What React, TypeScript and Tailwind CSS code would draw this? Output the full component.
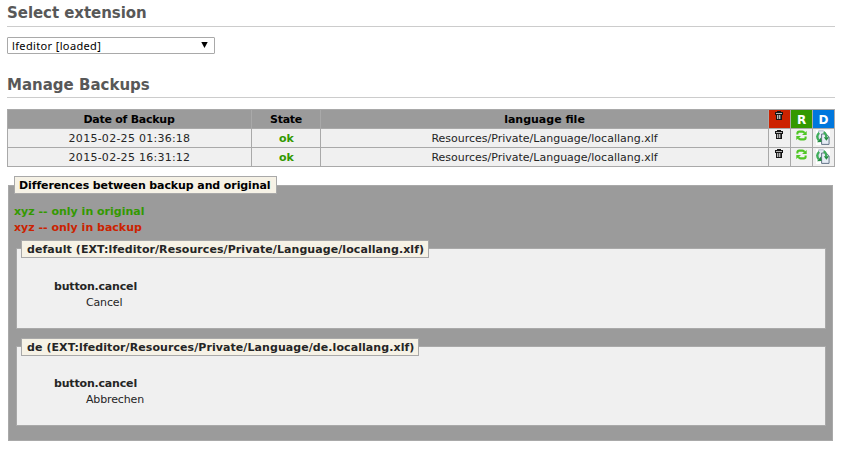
import type { ReactNode } from "react";

function TrashIcon() {
  return (
    <svg width="8" height="9" viewBox="0 0 8 9" shapeRendering="crispEdges" className="block">
      <path fill="#b8b8b8" d="M1 2h6v1H1zM2 4h4v4H2z" />
      <path fill="#161616" d="M2 0h4v1H2zM0 1h8v1H0zM0 2h1v1H0zM7 2h1v1H7zM0 3h8v1H0zM1 4h1v5H1zM6 4h1v5H6zM1 8h6v1H1z" />
      <path fill="#555" d="M3 4h1v4H3zM5 4h1v4H5z" />
    </svg>
  );
}

function RestoreIcon() {
  return (
    <svg width="11" height="11" viewBox="0 0 11 11" className="block">
      <path fill="none" stroke="#4fc624" strokeWidth="2.1" d="M1.4 4.6V3.3Q1.4 1.6 3.2 1.6h3.2Q7.8 1.6 8.4 3M9.6 6.4v1.3Q9.6 9.4 7.8 9.4H4.6Q3.2 9.4 2.6 8" />
      <path fill="#4fc624" d="M10.7 1v4.1H6zM.3 10V5.9H5z" />
    </svg>
  );
}

function DiffIcon() {
  return (
    <svg width="14" height="15" viewBox="0 0 14 15" className="block">
      <path fill="#fff" d="M0 0h14v15H0z" />
      <path fill="#e6edf5" stroke="#9aa8b8" strokeWidth=".7" d="M2.6.8h4.9l2 2.2v7.5H2.6z" />
      <path fill="#e6edf5" stroke="#52657a" strokeWidth=".9" d="M5.6 4h4.6l2.9 3v7.4H5.6z" />
      <path fill="none" stroke="#3fae5a" strokeWidth="2.2" d="M3.2 2.8C.9 4.8.8 7.8 2.7 10.2" />
      <path fill="none" stroke="#3fae5a" strokeWidth="2.2" d="M7.6 2.2c2 .9 2.8 2.8 2.7 5.3" />
      <path fill="#238d40" d="M1 12.2l4.6-.2L5 7.4zM7.8 7.3h5.2l-2.6 3.5z" />
    </svg>
  );
}

const rows = ["2015-02-25 01:36:18", "2015-02-25 16:31:12"];
const columns = "grid grid-cols-[243px_68px_447px_21px_21px_21px] gap-x-px";

function Cell({ children, className = "bg-[#f0f0f0] pt-[2px]" }: { children: ReactNode; className?: string }) {
  return <div className={`flex h-[18px] items-center justify-center ${className}`}>{children}</div>;
}

function Heading({ children, className }: { children: ReactNode; className: string }) {
  return (
    <h2 className={`h-[27px] border-b border-[#ccc] text-[15px] leading-[18px] font-bold text-[#585858] ${className}`}>
      <span className="whitespace-nowrap">{children}</span>
    </h2>
  );
}

function Legend({ children, className }: { children: ReactNode; className: string }) {
  return (
    <div className={`flex h-[18px] items-center border border-[#a9a9a9] bg-[#f6f2e6] pt-px font-bold whitespace-nowrap ${className}`}>
      {children}
    </div>
  );
}

function DiffGroup({ title, value, width, className, listClass }: { title: string; value: string; width: string; className: string; listClass: string }) {
  return (
    <section className={`ml-[7px] w-[810px] border border-[#a9a9a9] bg-[#f0f0f0] pl-1 ${className}`}>
      <Legend className={`-mt-[9px] pl-[5px] tracking-[0.075px] ${width}`}>{title}</Legend>
      <dl className={`pl-[33px] leading-4 ${listClass}`}>
        <dt className="font-bold tracking-[-0.18px]">button.cancel</dt>
        <dd className="pl-8 tracking-[-0.15px]">{value}</dd>
      </dl>
    </section>
  );
}

export default function App() {
  return (
    <main className="h-[449px] w-[843px] overflow-hidden bg-white pl-[7px] font-['DejaVu_Sans',Verdana,sans-serif] text-[11px] leading-4 text-[#252525]">
      <div className="w-[828px]">
        <Heading className="pt-1 tracking-[-0.05px]">Select extension</Heading>
        <button className="mt-[10px] flex h-[17px] w-[208px] items-center justify-between rounded-[1px] border border-[#a9a9a9] bg-white pr-[6px] pl-1 font-['Noto_Sans',sans-serif] text-black">
          <span className="tracking-[0.36px] whitespace-nowrap">lfeditor [loaded]</span>
          <svg width="7" height="6" viewBox="0 0 7 6" className="mb-[2px]"><path d="M.3 0h6.4L3.5 6z" /></svg>
        </button>
        <div className="mt-[17px]"><Heading className="pt-[5px]">Manage Backups</Heading></div>

        <div className="mt-[11px] flex flex-col gap-px border border-[#a9a9a9] bg-[#a9a9a9]">
          <div className={`${columns} font-bold text-black`}>
            <Cell className="bg-[#9b9b9b] pt-[2px] pr-px tracking-[-0.25px]">Date of Backup</Cell>
            <Cell className="bg-[#9b9b9b] pt-[2px] tracking-[-0.3px]">State</Cell>
            <Cell className="bg-[#9b9b9b] pt-[2px]">language file</Cell>
            <Cell className="bg-[#cc2200] pr-px pb-[7px]"><TrashIcon /></Cell>
            <Cell className="bg-[#339900] pt-[2px] text-xs text-white">R</Cell>
            <Cell className="bg-[#0077dd] pt-[2px] text-xs text-white">D</Cell>
          </div>
          {rows.map((date) => (
            <div key={date} className={columns}>
              <Cell><span className="tracking-[0.26px]">{date}</span></Cell>
              <Cell className="bg-[#f0f0f0] pt-[2px] pl-px"><b className="text-[#339900]">ok</b></Cell>
              <Cell>Resources/Private/Language/locallang.xlf</Cell>
              <Cell className="bg-[#f0f0f0] pr-px pb-[7px]"><TrashIcon /></Cell>
              <Cell className="bg-[#f0f0f0] pb-[5px]"><RestoreIcon /></Cell>
              <Cell className="bg-[#f0f0f0] pr-px pb-px"><DiffIcon /></Cell>
            </div>
          ))}
        </div>

        <section className="mt-[18px] ml-px h-[256px] w-[825px] border border-[#a9a9a9] bg-[#9b9b9b]">
          <Legend className="-mt-[10px] ml-[5px] w-[263px] pl-1 tracking-[-0.1px] text-black">Differences between backup and original</Legend>
          <div className="mt-[10px] pl-[5px] font-bold">
            <p className="text-[#339900]">xyz -- only in original</p>
            <p className="text-[#cc2200]">xyz -- only in backup</p>
          </div>
          <DiffGroup className="mt-3 h-[81px]" listClass="mt-[21px]" width="w-[408px]" title="default (EXT:lfeditor/Resources/Private/Language/locallang.xlf)" value="Cancel" />
          <DiffGroup className="mt-[17px] h-[80px]" listClass="mt-5" width="w-[398px]" title="de (EXT:lfeditor/Resources/Private/Language/de.locallang.xlf)" value="Abbrechen" />
        </section>
      </div>
    </main>
  );
}
